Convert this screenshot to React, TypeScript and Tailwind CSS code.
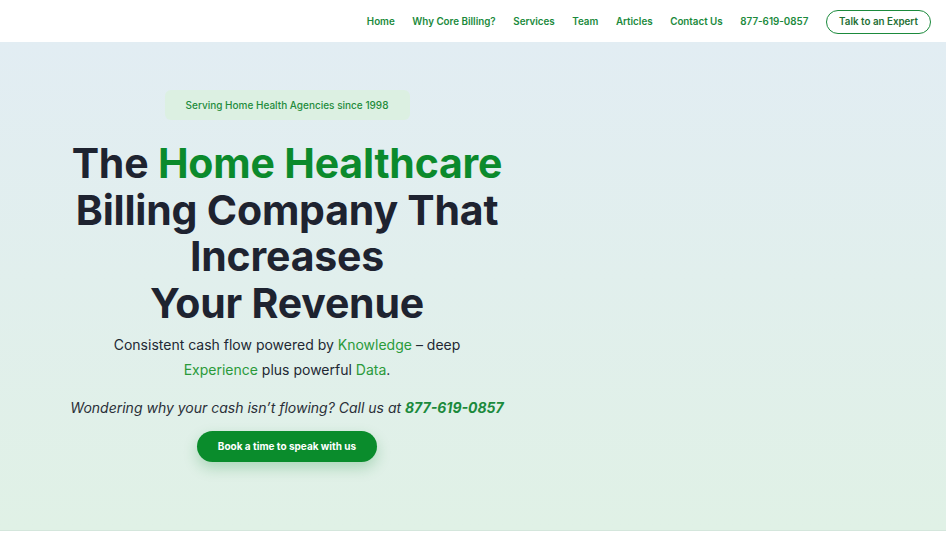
const navLinks = ["Home", "Why Core Billing?", "Services", "Team", "Articles", "Contact Us", "877-619-0857"];

function Header() {
  return (
    <header className="h-[42px] pt-[2px] bg-white flex items-center justify-end pr-[15px]">
      <nav className="flex items-center gap-[17.6px]">
        {navLinks.map((link) => (
          <a key={link} href="#" className="text-[9.8px] font-semibold text-[#1b8a3c]">
            {link}
          </a>
        ))}
        <a
          href="#"
          className="h-[24px] w-[105px] flex items-center justify-center rounded-full border-[1.5px] border-[#1b8a3c] text-[9.8px] font-semibold text-[#1f6f34]"
        >
          Talk to an Expert
        </a>
      </nav>
    </header>
  );
}

function Hero() {
  return (
    <section className="h-[489px] bg-gradient-to-b from-[#e2edf3] to-[#e0f1e6] border-b border-[#d4e6dc] flex">
      <div className="w-[574px] flex flex-col items-center pt-[48px] text-center">
        <div className="h-[30px] w-[245px] flex items-center justify-center rounded-md bg-[#dcf0e2] text-[10px] font-medium text-[#1f8c3c]">
          Serving Home Health Agencies since 1998
        </div>
        <h1 className="mt-[20px] text-[41px] leading-[46.5px] font-bold text-[#1e2330] tracking-[-0.2px]">
          The <span className="text-[#0b8a2c]">Home Healthcare</span>
          <br />
          Billing Company That
          <br />
          Increases
          <br />
          Your Revenue
        </h1>
        <p className="mt-[6px] w-[370px] text-[14px] leading-[25px] text-[#222833]">
          Consistent cash flow powered by <span className="text-[#2a9a3a]">Knowledge</span> – deep{" "}
          <span className="text-[#2a9a3a]">Experience</span> plus powerful{" "}
          <span className="text-[#2a9a3a]">Data</span>.
        </p>
        <p className="mt-[13px] text-[14px] leading-[25px] italic text-[#2a2f38]">
          Wondering why your cash isn’t flowing? Call us at{" "}
          <span className="font-bold text-[#1b8a3c]">877-619-0857</span>
        </p>
        <a
          href="#"
          className="mt-[11px] h-[31px] w-[180px] flex items-center justify-center rounded-full bg-[#0a8c2c] text-[10px] font-bold text-white shadow-[0_6px_14px_rgba(20,140,50,0.25)]"
        >
          Book a time to speak with us
        </a>
      </div>
    </section>
  );
}

export default function App() {
  return (
    <div className="min-h-[533px] bg-white font-['Inter',sans-serif]">
      <Header />
      <Hero />
    </div>
  );
}
